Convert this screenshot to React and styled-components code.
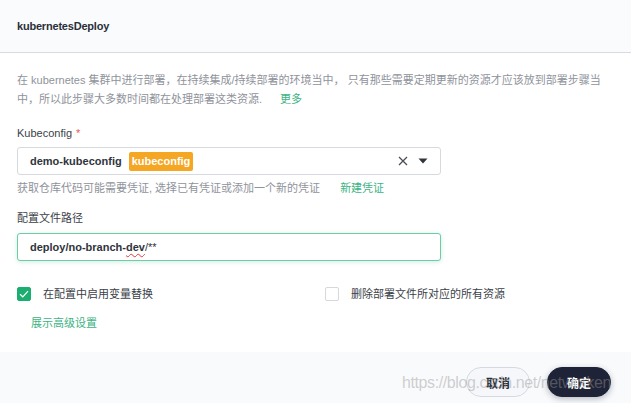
import React from 'react';
import styled, { createGlobalStyle } from 'styled-components';

const GlobalStyle = createGlobalStyle`
  html, body {
    margin: 0;
    padding: 0;
    background: #fff;
  }
  body {
    font-family: "Liberation Sans", "Noto Sans CJK SC", sans-serif;
    color: #3b3f48;
  }
`;

const Dialog = styled.div`
  position: relative;
  width: 631px;
  height: 403px;
  display: flex;
  flex-direction: column;
  background: #fff;
  overflow: hidden;
`;

const Header = styled.div`
  height: 52px;
  display: flex;
  align-items: center;
  padding: 0 17px;
  background: #f9fbfd;
  border-bottom: 1px solid #d9dbde;

  h3 {
    margin: 0;
    font-size: 11px;
    letter-spacing: -0.2px;
    font-weight: 700;
    color: #2b2f38;
  }
`;

const Body = styled.div`
  flex: 1;
  padding: 18px 17px 0;
  display: flex;
  flex-direction: column;
`;

const Desc = styled.p`
  margin: 0;
  font-size: 11px;
  line-height: 19px;
  color: #8f939b;
`;

const Link = styled.a`
  color: #3cb383;
  margin-left: ${p => p.$gap || 0}px;
  cursor: pointer;
`;

const Label = styled.div`
  margin-top: ${p => p.$top}px;
  font-size: 11px;
  line-height: 18px;
  color: #3b3f48;

  span {
    color: #e85757;
    margin-left: 4px;
  }
`;

const Field = styled.div`
  margin-top: ${p => p.$top}px;
  width: 424px;
  height: 28px;
  box-sizing: border-box;
  display: flex;
  align-items: center;
  padding: 0 12px;
  border: 1px solid ${p => (p.$focus ? '#6fcca6' : '#d6d9de')};
  border-radius: 3px;
  background: #fff;
  box-shadow: ${p => (p.$focus ? '0 1px 4px rgba(60, 179, 131, 0.25)' : 'none')};
  font-size: 11px;
  font-weight: 700;
  color: #30343c;
`;

const Badge = styled.span`
  margin-left: 7px;
  padding: 0 3px;
  height: 19px;
  line-height: 19px;
  background: #f5a623;
  border-radius: 2px;
  color: #fff;
  font-weight: 700;
`;

const Actions = styled.div`
  margin-left: auto;
  display: flex;
  align-items: center;
  gap: 10px;
  color: #4a4e57;
`;

const Squiggle = styled.span`
  text-decoration: underline wavy #e23b3b;
  text-decoration-thickness: 1px;
  text-underline-offset: 2px;
`;

const Plain = styled.span`
  font-weight: 400;
`;

const Help = styled.div`
  margin-top: 5px;
  font-size: 11px;
  line-height: 17px;
  color: #8f939b;
`;

const CheckRow = styled.div`
  margin-top: 24px;
  display: flex;
  align-items: center;
`;

const CheckItem = styled.label`
  width: ${p => p.$width}px;
  display: flex;
  align-items: center;
  gap: 12px;
  font-size: 11px;
  line-height: 18px;
  color: #3b3f48;
`;

const Box = styled.span`
  width: 14px;
  height: 14px;
  box-sizing: border-box;
  border-radius: 2px;
  display: flex;
  align-items: center;
  justify-content: center;
  background: ${p => (p.$checked ? '#1cae70' : '#fff')};
  border: 1px solid ${p => (p.$checked ? '#1cae70' : '#d5d8dc')};
`;

const Advanced = styled.div`
  margin-top: 11px;
  padding-left: 14px;
  font-size: 11px;
  line-height: 18px;
`;

const Footer = styled.div`
  height: 51px;
  box-sizing: border-box;
  padding: 15px 20px 0 0;
  display: flex;
  justify-content: flex-end;
  align-items: flex-start;
  gap: 17px;
  background: #f8fafc;
`;

const Button = styled.button`
  width: 64px;
  height: 30px;
  border-radius: 15px;
  font-family: inherit;
  font-size: 12px;
  font-weight: 700;
  cursor: pointer;
  border: 1px solid ${p => (p.$primary ? '#1f2337' : '#d6dae0')};
  background: ${p => (p.$primary ? '#1f2337' : '#f5f7fa')};
  color: ${p => (p.$primary ? '#fff' : '#2b2f38')};
  box-shadow: ${p => (p.$primary ? '0 2px 6px rgba(31, 35, 55, 0.3)' : 'none')};
`;

const Watermark = styled.div`
  position: absolute;
  left: 402px;
  top: 374px;
  font-family: "Liberation Sans", sans-serif;
  font-size: 16px;
  letter-spacing: -0.4px;
  color: rgba(150, 150, 150, 0.45);
  pointer-events: none;
  white-space: nowrap;
`;

const ClearIcon = () => (
  <svg width="10" height="10" viewBox="0 0 10 10">
    <path d="M1 1L9 9M9 1L1 9" stroke="#4a4e57" strokeWidth="1.3" fill="none" />
  </svg>
);

const CaretIcon = () => (
  <svg width="10" height="6" viewBox="0 0 10 6">
    <path d="M0.5 0.5H9.5L5 5.5Z" fill="#30343c" />
  </svg>
);

const CheckIcon = () => (
  <svg width="10" height="8" viewBox="0 0 10 8">
    <path d="M1 4.2L3.8 6.8L9 1.2" stroke="#fff" strokeWidth="1.2" fill="none" />
  </svg>
);

const App = () => {
  return (
    <>
      <GlobalStyle />
      <Dialog>
        <Header>
          <h3>kubernetesDeploy</h3>
        </Header>
        <Body>
          <Desc>
            在 kubernetes 集群中进行部署，在持续集成/持续部署的环境当中， 只有那些需要定期更新的资源才应该放到部署步骤当中，所以此步骤大多数时间都在处理部署这类资源.
            <Link $gap={18}>更多</Link>
          </Desc>

          <Label $top={15}>
            Kubeconfig<span>*</span>
          </Label>
          <Field $top={5}>
            demo-kubeconfig
            <Badge>kubeconfig</Badge>
            <Actions>
              <ClearIcon />
              <CaretIcon />
            </Actions>
          </Field>
          <Help>
            获取仓库代码可能需要凭证, 选择已有凭证或添加一个新的凭证
            <Link $gap={20}>新建凭证</Link>
          </Help>

          <Label $top={12}>配置文件路径</Label>
          <Field $top={6} $focus>
            deploy/no-branch-<Squiggle>dev</Squiggle><Plain>/**</Plain>
          </Field>

          <CheckRow>
            <CheckItem $width={308}>
              <Box $checked>
                <CheckIcon />
              </Box>
              在配置中启用变量替换
            </CheckItem>
            <CheckItem>
              <Box />
              删除部署文件所对应的所有资源
            </CheckItem>
          </CheckRow>

          <Advanced>
            <Link>展示高级设置</Link>
          </Advanced>
        </Body>
        <Footer>
          <Button>取消</Button>
          <Button $primary>确定</Button>
        </Footer>
        <Watermark>https://blog.csdn.net/networken</Watermark>
      </Dialog>
    </>
  );
};

export default App;
